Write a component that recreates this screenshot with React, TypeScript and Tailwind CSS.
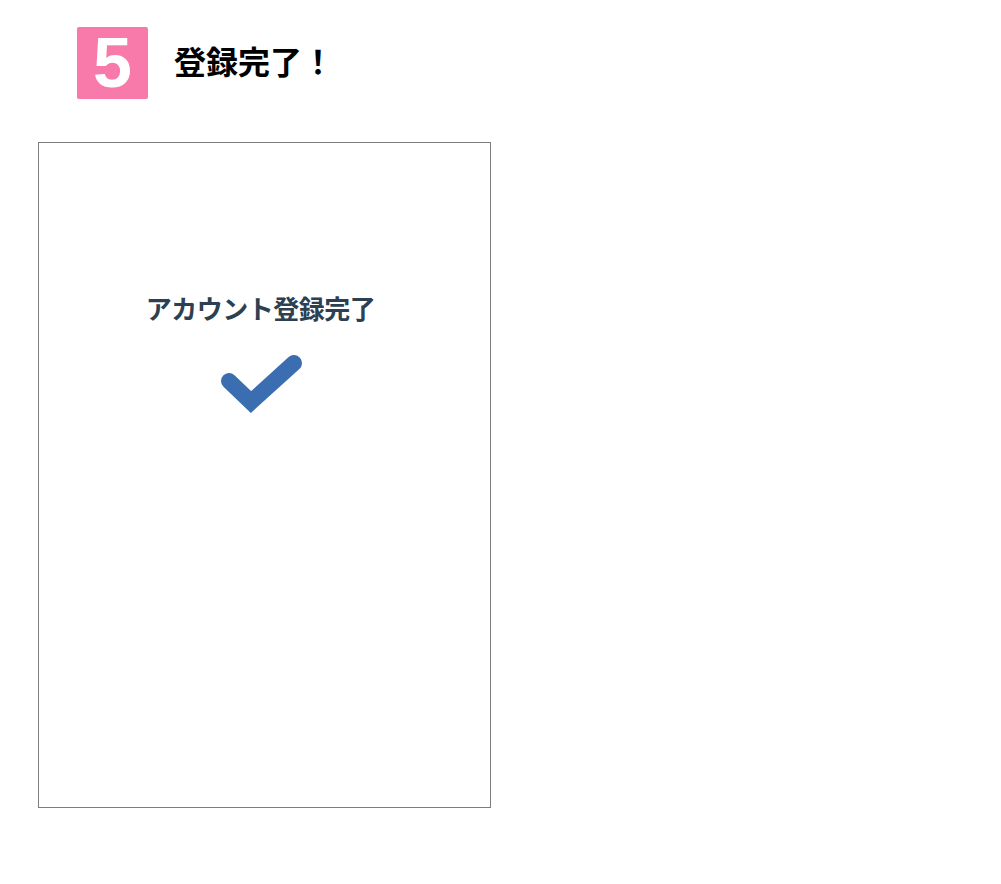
export default function App() {
  return (
    <div
      className="min-h-screen bg-white pt-[27px]"
      style={{ fontFamily: '"Noto Sans CJK JP", "Noto Sans", sans-serif' }}
    >
      {/* Step header */}
      <div className="flex items-center pl-[77px]">
        <div className="flex h-[72px] w-[71px] items-center justify-center rounded-[2px] bg-[#f77aab]">
          <span
            className="text-[70px] font-bold leading-none text-white"
            style={{ fontFamily: '"Liberation Sans", Arial, sans-serif' }}
          >
            5
          </span>
        </div>
        <h1 className="ml-[26px] pb-[6px] text-[32px] font-bold leading-none text-black">
          登録完了！
        </h1>
      </div>

      {/* Phone screen */}
      <div className="ml-[38px] mt-[43px] flex h-[666px] w-[453px] flex-col items-center border border-[#7d7d7d] pt-[152px]">
        <p className="pr-[8px] text-[26px] font-bold leading-none tracking-[-0.5px] text-[#2d3f52]">
          アカウント登録完了
        </p>
        <svg
          className="mt-[34px] mr-[6px]"
          width="84"
          height="64"
          viewBox="0 0 84 64"
        >
          <path
            d="M9 26 L31 47 L74 8"
            fill="none"
            stroke="#3b6db1"
            strokeWidth="16"
            strokeLinecap="round"
            strokeLinejoin="miter"
          />
        </svg>
      </div>
    </div>
  );
}
